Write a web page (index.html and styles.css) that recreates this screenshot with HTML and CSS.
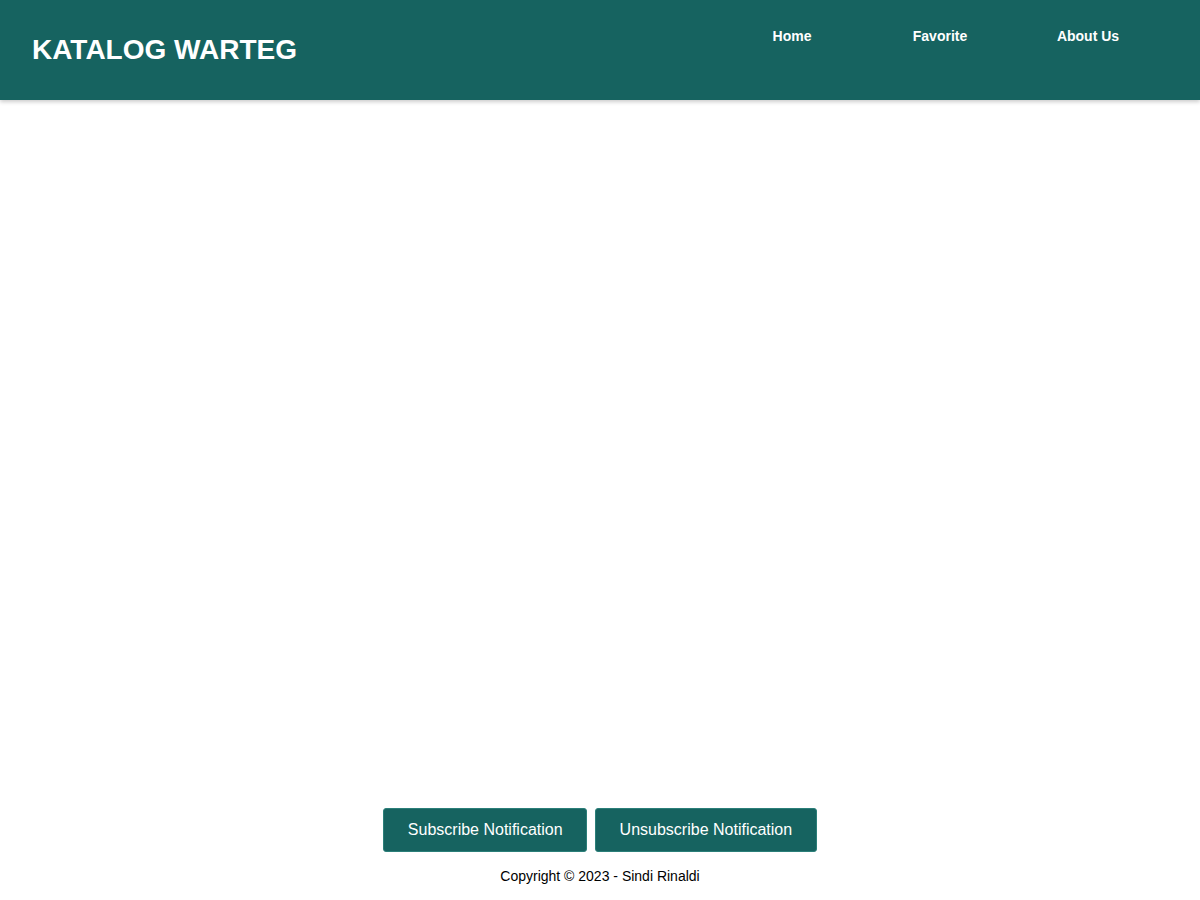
FILE: index.html
```html
<!DOCTYPE html>
<html lang="id">
<head>
<meta charset="utf-8">
<title>Katalog Warteg</title>
<link rel="stylesheet" href="styles.css">
</head>
<body>
<header class="app-bar">
  <h1 class="app-title">KATALOG WARTEG</h1>
  <nav class="nav">
    <ul class="nav-list">
      <li class="nav-item"><a href="#" class="nav-link">Home</a></li>
      <li class="nav-item"><a href="#" class="nav-link">Favorite</a></li>
      <li class="nav-item"><a href="#" class="nav-link">About Us</a></li>
    </ul>
  </nav>
</header>
<main class="content"></main>
<footer class="footer">
  <div class="footer-actions">
    <button class="btn">Subscribe Notification</button>
    <button class="btn">Unsubscribe Notification</button>
  </div>
  <p class="copyright">Copyright © 2023 - Sindi Rinaldi</p>
</footer>
</body>
</html>
```

FILE: styles.css
```css
* { box-sizing: border-box; }
html, body { margin: 0; padding: 0; }
body {
  font-family: "Liberation Sans", Arial, sans-serif;
  min-height: 100vh;
  display: flex;
  flex-direction: column;
  background: #fff;
  color: #000;
}
.app-bar {
  height: 100px;
  background: #166360;
  display: flex;
  justify-content: space-between;
  align-items: flex-start;
  padding: 0 38px 0 32px;
  box-shadow: 0 2px 4px rgba(0,0,0,0.2);
  position: relative;
  z-index: 1;
}
.app-title {
  margin: 0;
  margin-top: 34px;
  font-size: 28px;
  line-height: 32px;
  font-weight: bold;
  color: #fff;
}
.nav-list {
  list-style: none;
  margin: 0;
  padding: 0;
  display: flex;
  margin-top: 27px;
}
.nav-item {
  width: 148px;
  text-align: center;
}
.nav-link {
  color: #fff;
  text-decoration: none;
  font-weight: bold;
  font-size: 14px;
  line-height: 16px;
}
.content { flex: 1; }
.footer {
  display: flex;
  flex-direction: column;
  align-items: center;
}
.footer-actions {
  display: flex;
  gap: 8px;
}
.btn {
  height: 44px;
  padding: 0 23.5px;
  font-family: "Liberation Sans", Arial, sans-serif;
  font-size: 16px;
  color: #fff;
  background: #166360;
  border: 1px solid #2b7f79;
  border-radius: 3px;
  cursor: pointer;
}
.copyright {
  margin: 16px 0 16px;
  font-size: 14px;
  line-height: 16px;
}
```
